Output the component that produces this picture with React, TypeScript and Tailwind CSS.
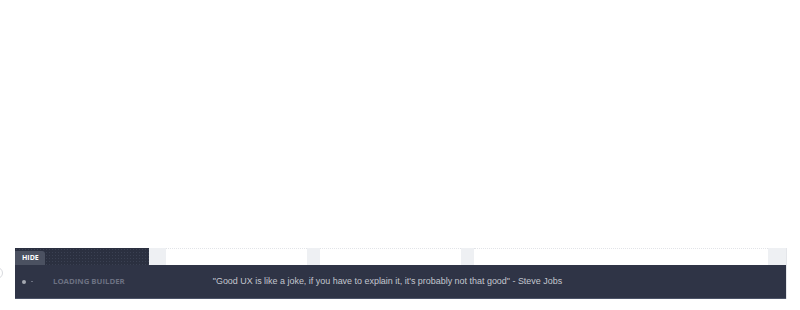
export default function App(): JSX.Element {
  return (
    <div className="relative h-[310px] w-full bg-white pl-[15px] pt-[248px]">
      <div className="absolute left-[-9px] top-[267px] h-[12px] w-[12px] rounded-full border border-[#d8dade]" />
      <div className="w-[772px] border-r border-[#e4e6ea]">
        <TopStrip />
        <StatusBar />
      </div>
    </div>
  );
}

function TopStrip(): JSX.Element {
  return (
    <div className="flex h-[17px]">
      <div className="flex w-[134px] items-end bg-[#2b3040] bg-[radial-gradient(#3a4052_1px,transparent_1px)] bg-[length:3px_3px]">
        <button className="h-[14px] w-[30px] rounded-tr-[3px] bg-[#4b5161] pl-[7px] text-left font-['Open_Sans',sans-serif] text-[7px] font-bold leading-[14px] text-white">
          HIDE
        </button>
      </div>
      <div className="w-[17px] bg-[#eef0f3]" />
      <div className="w-[141px] border-t border-dotted border-[#e2e4e8] bg-white" />
      <div className="w-[13px] bg-[#eef0f3]" />
      <div className="w-[141px] border-t border-dotted border-[#e2e4e8] bg-white" />
      <div className="w-[13px] bg-[#eef0f3]" />
      <div className="w-[294px] border-t border-dotted border-[#e2e4e8] bg-white" />
      <div className="w-[18px] bg-[#eef0f3]" />
    </div>
  );
}

function StatusBar(): JSX.Element {
  return (
    <div className="flex h-[34px] items-center border-b border-[#4d5468] bg-[#2f3446]">
      <div className="ml-[7px] flex items-center gap-[5px]">
        <span className="h-[4px] w-[4px] rounded-full bg-[#a4a8b2]" />
        <span className="h-[1px] w-[2px] bg-[#6b7080]" />
      </div>
      <span className="ml-[20px] font-['Open_Sans',sans-serif] text-[7.8px] font-bold text-[#6c7182]">
        LOADING BUILDER
      </span>
      <span className="ml-[88px] font-['Liberation_Sans',Arial,sans-serif] text-[8.95px] text-[#c3c6ce]">
        "Good UX is like a joke, if you have to explain it, it's probably not
        that good" - Steve Jobs
      </span>
    </div>
  );
}
